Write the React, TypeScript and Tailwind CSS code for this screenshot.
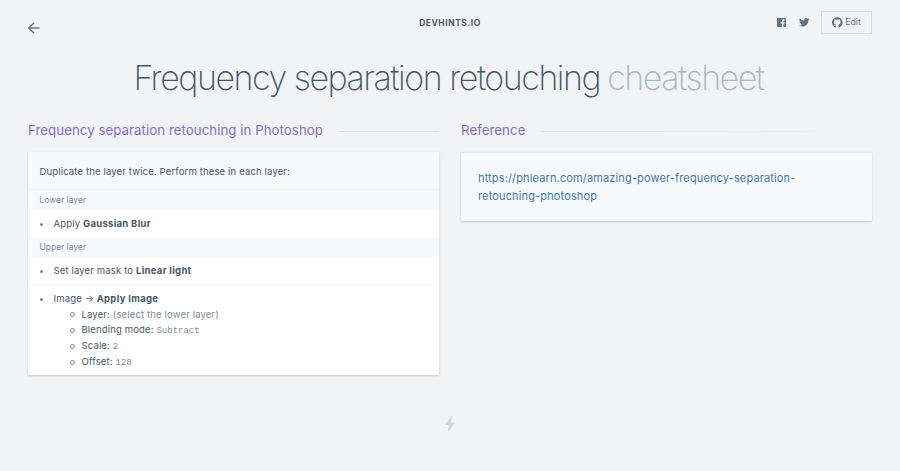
import type { ReactNode } from "react";

function Heading({ children, fade = false }: { children: ReactNode; fade?: boolean }) {
  return (
    <h2 className="flex h-5 items-center gap-4 text-[13.3px] leading-5 tracking-[0.03px] text-[#8570c4]">
      <span className="whitespace-nowrap">{children}</span>
      <span className={fade ? "mt-[3px] h-px flex-1 bg-linear-to-r from-[#dddfee] to-[#f1f3f5]" : "mt-[3px] h-px flex-1 bg-[#dddfeb]"} />
    </h2>
  );
}

function Label({ children }: { children: ReactNode }) {
  return <h3 className="h-5 bg-[#f7f9fb] px-[11.5px] text-[8.4px] leading-[21px] tracking-[0.06px] text-[#7b8b9c]">{children}</h3>;
}

function Item({ children }: { children: ReactNode }) {
  return (
    <div className="flex h-[27px] items-center pt-px pl-[11.5px]">
      <span className="mr-[11px] size-[3px] rounded-full bg-[#718397]" />
      <span className="whitespace-nowrap">{children}</span>
    </div>
  );
}

function SubItem({ name, children }: { name: string; children: ReactNode }) {
  return (
    <li className="flex h-[15.9px] items-center">
      <span className="mr-[7px] mb-px size-[5px] rounded-full border border-[#718094]" />
      <span className="whitespace-nowrap">{name}: {children}</span>
    </li>
  );
}

export default function App() {
  return (
    <main className="h-[471px] w-[900px] overflow-hidden bg-[#f1f3f5] px-7 pt-[11px] font-['Inter',sans-serif] text-[#45566a]">
      <header className="grid h-[23px] grid-cols-3 items-center">
        <svg className="mt-[11px] size-3 text-[#657b8e]" viewBox="0 0 12 12" fill="none" stroke="currentColor" strokeWidth="1.5">
          <path d="M11.5 6H1.2M6 .9.9 6 6 11.1" />
        </svg>
        <div className="text-center text-[8.4px] leading-4 font-bold tracking-[0.6px]"><span className="relative top-[0.5px]">DEVHINTS.IO</span></div>
        <div className="flex items-center justify-end text-[#607487]">
          <svg className="mr-[13.5px] size-[9px]" viewBox="0 0 18 18" fill="currentColor">
            <path d="M1 0h16a1 1 0 0 1 1 1v16a1 1 0 0 1-1 1h-4.3v-7H15l.4-2.8h-2.7V6.5c0-.8.3-1.3 1.4-1.3h1.4V2.7c-.3 0-1.1-.1-2.1-.1-2.1 0-3.5 1.3-3.5 3.6v2H7.5V11h2.4v7H1a1 1 0 0 1-1-1V1a1 1 0 0 1 1-1Z" />
          </svg>
          <svg className="mr-[11.5px] size-[10.5px]" viewBox="0 0 24 24" fill="currentColor">
            <path d="M23.95 4.57a10 10 0 0 1-2.82.78 4.96 4.96 0 0 0 2.16-2.73 10 10 0 0 1-3.13 1.2 4.92 4.92 0 0 0-8.38 4.48A13.93 13.93 0 0 1 1.67 3.15a4.92 4.92 0 0 0 1.52 6.57 4.9 4.9 0 0 1-2.23-.61v.06a4.92 4.92 0 0 0 3.95 4.83 5 5 0 0 1-2.21.08 4.94 4.94 0 0 0 4.6 3.42A9.87 9.87 0 0 1 0 19.54a14 14 0 0 0 7.55 2.21c9.05 0 14-7.5 14-13.98 0-.21 0-.42-.02-.63a9.94 9.94 0 0 0 2.42-2.57Z" />
          </svg>
          <a className="flex h-[23px] w-[51px] items-center justify-center gap-[2.5px] border border-[#d8dde5] text-[8.7px]">
            <svg className="size-[10.5px]" viewBox="0 0 24 24" fill="currentColor">
              <path d="M12 .5C5.4.5 0 5.8 0 12.4c0 5.3 3.4 9.7 8.2 11.3.6.1.8-.2.8-.6v-2.2c-3.3.7-4-1.4-4-1.4-.6-1.4-1.4-1.8-1.4-1.8-1-.7.1-.7.1-.7 1.2.1 1.8 1.2 1.8 1.2 1.1 1.8 2.8 1.3 3.5 1 .1-.8.4-1.3.8-1.6-2.7-.3-5.5-1.3-5.5-5.9 0-1.3.5-2.4 1.2-3.2-.1-.3-.5-1.5.1-3.2 0 0 1-.3 3.3 1.2a11.5 11.5 0 0 1 6 0C17.2 5 18.2 5.3 18.2 5.3c.7 1.7.3 2.9.2 3.2.8.8 1.2 1.9 1.2 3.2 0 4.6-2.8 5.6-5.5 5.9.4.4.8 1.1.8 2.2v3.3c0 .4.2.7.8.6A12 12 0 0 0 24 12.4C24 5.8 18.6.5 12 .5Z" />
            </svg>
            Edit
          </a>
        </div>
      </header>
      <h1 className="mt-[19px] -ml-[3px] h-[50px] text-center text-[34px] leading-[50px] font-extralight tracking-[-1.47px] whitespace-nowrap">
        Frequency separation retouching <span className="-ml-px text-[#a9b7c5]">cheatsheet</span>
      </h1>
      <div className="mt-[17px] grid grid-cols-[411px_411px] gap-[22px]">
        <section>
          <Heading>Frequency separation retouching in Photoshop</Heading>
          <div className="mt-3 h-[223px] bg-white text-[9.5px] tracking-[0.15px] shadow-[0_1px_2px_rgba(65,80,110,0.24)] [&_b]:tracking-[0.3px]">
            <p className="h-[38px] border-b border-[#f0f2f5] bg-[#f7f9fb] px-[11.5px] leading-[39px]">Duplicate the layer twice. Perform these in each layer:</p>
            <Label>Lower layer</Label>
            <Item>Apply <b>Gaussian Blur</b></Item>
            <Label>Upper layer</Label>
            <Item>Set layer mask to <b>Linear light</b></Item>
            <div className="border-t border-[#f8f9fb]">
              <Item>Image → <b>Apply Image</b></Item>
            </div>
            <ul className="-mt-[5px] pl-[41.5px]">
              <SubItem name="Layer"><span className="text-[#7a8b9d]">(select the lower layer)</span></SubItem>
              <SubItem name="Blending mode"><code className="font-['Liberation_Mono',monospace] text-[9px] tracking-normal text-[#7a8b9d]">Subtract</code></SubItem>
              <SubItem name="Scale"><code className="font-['Liberation_Mono',monospace] text-[9px] tracking-normal text-[#7a8b9d]">2</code></SubItem>
              <SubItem name="Offset"><code className="font-['Liberation_Mono',monospace] text-[9px] tracking-normal text-[#7a8b9d]">128</code></SubItem>
            </ul>
          </div>
        </section>
        <section>
          <Heading fade>Reference</Heading>
          <div className="mt-3 h-[69px] border-t border-[#e5e8ed] bg-[#f7f9fb] px-[17px] pt-4 text-[11px] leading-[18px] tracking-[0.14px] text-[#3d7ba5] shadow-[0_1px_2px_rgba(65,80,110,0.24)]">
            <a>https://phlearn.com/amazing-power-frequency-separation-<br />retouching-photoshop</a>
          </div>
        </section>
      </div>
      <svg className="mx-auto mt-[41px] h-4 w-3 text-[#d0d5dc]" viewBox="0 0 12 16" fill="currentColor">
        <path d="M7.5 0 0.8 9h4L3.8 16 11.2 6.5H7Z" />
      </svg>
    </main>
  );
}
